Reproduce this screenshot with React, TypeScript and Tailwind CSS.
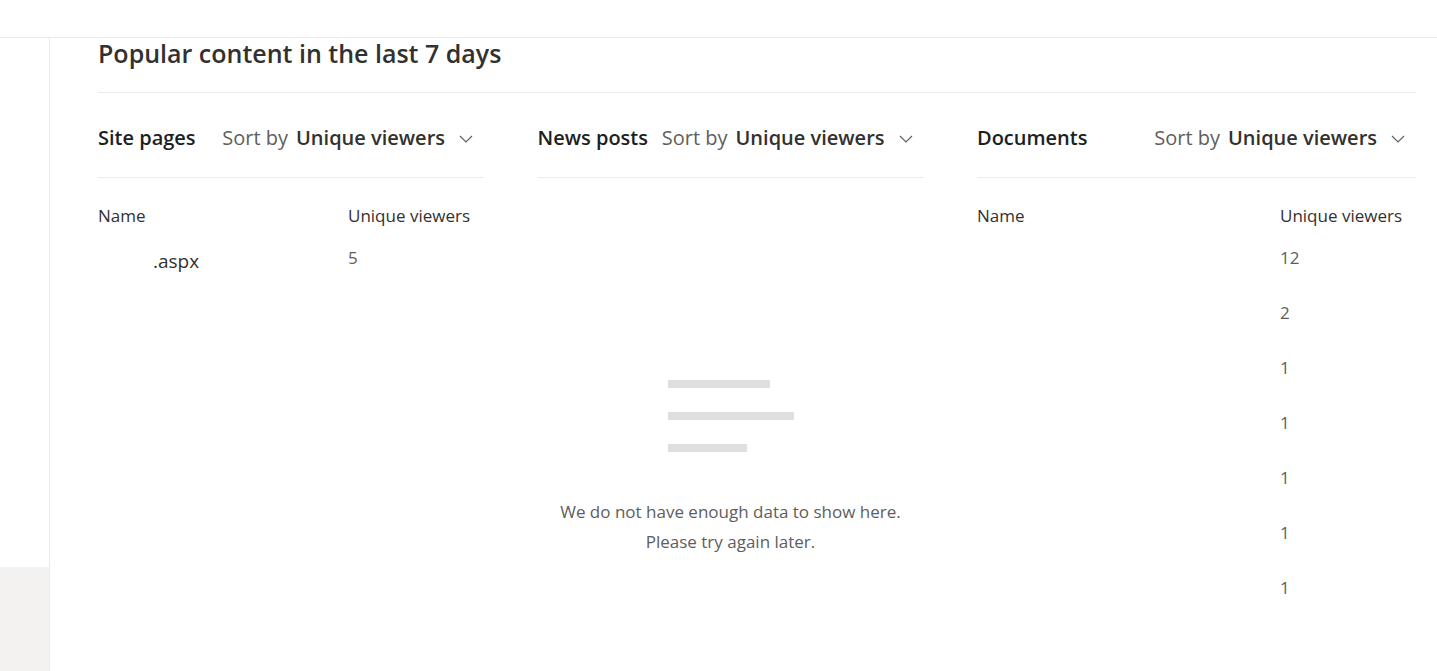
import React from "react";

const font = { fontFamily: '"Segoe UI", "Open Sans", "Noto Sans", sans-serif' };

const Chevron: React.FC = () => (
  <svg width="14" height="8" viewBox="0 0 14 8" className="ml-[14px] mt-[2px] shrink-0">
    <polyline points="1,1 7,7 13,1" fill="none" stroke="#605e5c" strokeWidth="1.1" />
  </svg>
);

const SortBy: React.FC = () => (
  <div className="flex shrink-0 items-center whitespace-nowrap">
    <span className="text-[20px] text-[#605e5c]">Sort by</span>
    <span className="ml-[8px] text-[20px] font-semibold text-[#323130]">Unique viewers</span>
    <Chevron />
  </div>
);

const SectionHeader: React.FC<{ title: string }> = ({ title }) => (
  <div className="flex h-[85px] items-center justify-between whitespace-nowrap border-b border-[#edebe9] pt-[6px] pr-[11px]">
    <span className="text-[20px] font-semibold text-[#201f1e]">{title}</span>
    <SortBy />
  </div>
);

const TableHead: React.FC = () => (
  <div className="flex justify-between pt-[28px] pb-[22px] pr-[14px] text-[17px] leading-[20px] text-[#323130]">
    <span>Name</span>
    <span className="w-[122px]">Unique viewers</span>
  </div>
);

const docCounts = ["12", "2", "1", "1", "1", "1", "1"];

export default function App() {
  return (
    <div className="flex h-[671px] w-full flex-col overflow-hidden bg-white" style={font}>
      <div className="h-[38px] shrink-0 border-b border-[#edebe9]" />
      <div className="flex flex-1">
        {/* left rail */}
        <div className="flex w-[50px] shrink-0 flex-col border-r border-[#edebe9]">
          <div className="flex-1" />
          <div className="h-[104px] bg-[#f3f2f1]" />
        </div>

        <div className="flex-1 pl-[48px] pr-[21px]">
          <div className="h-[55px] border-b border-[#edebe9]">
            <h1 className="text-[25px] font-semibold leading-[30px] text-[#323130]">
              Popular content in the last 7 days
            </h1>
          </div>

          <div className="grid grid-cols-[386px_386px_1fr] gap-x-[53.5px]">
            {/* Site pages */}
            <div>
              <SectionHeader title="Site pages" />
              <TableHead />
              <div className="flex items-start justify-between pr-[14px] leading-[20px]">
                <span className="pl-[55px] pt-[3px] text-[19px] text-[#323130]">.aspx</span>
                <span className="w-[122px] text-[17px] text-[#605e5c]">5</span>
              </div>
            </div>

            {/* News posts */}
            <div>
              <SectionHeader title="News posts" />
              <div className="flex flex-col items-center pt-[202px]">
                <div className="flex w-[126px] flex-col gap-[24px]">
                  <div className="h-[8px] w-[102px] bg-[#e1dfdd]" />
                  <div className="h-[8px] w-[126px] bg-[#e1dfdd]" />
                  <div className="h-[8px] w-[79px] bg-[#e1dfdd]" />
                </div>
                <p className="mt-[45px] text-[17px] leading-[30px] text-[#605e5c]">
                  We do not have enough data to show here.
                </p>
                <p className="text-[17px] leading-[30px] text-[#605e5c]">Please try again later.</p>
              </div>
            </div>

            {/* Documents */}
            <div>
              <SectionHeader title="Documents" />
              <TableHead />
              <div className="flex flex-col gap-[35px]">
                {docCounts.map((c, i) => (
                  <div key={i} className="flex h-[20px] items-center justify-end pr-[14px]">
                    <span className="w-[122px] text-[17px] text-[#605e5c]">{c}</span>
                  </div>
                ))}
              </div>
            </div>
          </div>
        </div>
      </div>
    </div>
  );
}
